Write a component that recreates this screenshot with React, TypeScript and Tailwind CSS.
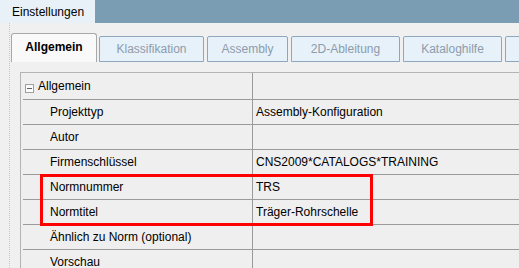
const tabs = [
  { label: 'Klassifikation', w: 'w-[105px]', ml: 'ml-[2px]' },
  { label: 'Assembly', w: 'w-[81px]', ml: 'ml-[3px]' },
  { label: '2D-Ableitung', w: 'w-[109px]', ml: 'ml-[3px]' },
  { label: 'Kataloghilfe', w: 'w-[99px]', ml: 'ml-[3px]' },
  { label: '', w: 'w-[90px]', ml: 'ml-[3px]' },
];

const rows: { name: string; value: string }[] = [
  { name: 'Projekttyp', value: 'Assembly-Konfiguration' },
  { name: 'Autor', value: '' },
  { name: 'Firmenschlüssel', value: 'CNS2009*CATALOGS*TRAINING' },
  { name: 'Normnummer', value: 'TRS' },
  { name: 'Normtitel', value: 'Träger-Rohrschelle' },
  { name: 'Ähnlich zu Norm (optional)', value: '' },
  { name: 'Vorschau', value: '' },
];

export default function App() {
  return (
    <div className="w-[519px] h-[268px] overflow-hidden bg-[#f0f0f0] text-[12px] text-black font-['Liberation_Sans','Noto_Sans',sans-serif]">
      {/* window header */}
      <div className="flex h-[23px] bg-[#7b9db3]">
        <div className="w-[95px] bg-[#e8f1f8] pl-[12px] flex items-center">Einstellungen</div>
      </div>

      {/* tab panel */}
      <div className="ml-[9px] h-[245px] border-l border-dotted border-[#c8c8c8] overflow-hidden">
        <div className="flex items-end pt-[10px] whitespace-nowrap">
          <div className="w-[86px] shrink-0 h-[29px] ml-[1px] flex items-center justify-center font-bold bg-[#f9f9f9] border border-b-0 border-[#a8a8a8] rounded-t-[3px] pb-[2px]">
            Allgemein
          </div>
          {tabs.map((t, i) => (
            <div
              key={i}
              className={`${t.w} ${t.ml} shrink-0 h-[26px] flex items-center justify-center text-[#8d9cab] bg-[#e6f1fa] border border-[#8ea7bd] rounded-t-[2px]`}
            >
              {t.label}
            </div>
          ))}
        </div>

        {/* property grid */}
        <div className="relative mt-[10px] ml-[10px] w-[520px] border-l border-t border-[#b4b4b4] bg-[#efefef]">
          <div className="ml-[2px] flex h-[27px] border-b border-[#9a9a9a]">
            <div className="w-[230px] flex items-center border-r border-[#9a9a9a]">
              <span className="ml-[2px] mt-[4px] w-[9px] h-[9px] border border-[#a0a0a0] bg-[#fbfbfb] flex items-center justify-center">
                <span className="w-[5px] h-px bg-[#606060]" />
              </span>
              <span className="ml-[4px]">Allgemein</span>
            </div>
            <div className="flex-1" />
          </div>
          {rows.map((r) => (
            <div key={r.name} className="ml-[2px] flex h-[25px] border-b border-[#9a9a9a]">
              <div className="w-[230px] pl-[27px] flex items-center border-r border-[#9a9a9a]">{r.name}</div>
              <div className="flex-1 pl-[3px] flex items-center">{r.value}</div>
            </div>
          ))}

          {/* highlight */}
          <div className="absolute left-[19px] top-[101px] w-[333px] h-[52px] border-[3px] border-[#ff0000]" />
        </div>
      </div>
    </div>
  );
}
